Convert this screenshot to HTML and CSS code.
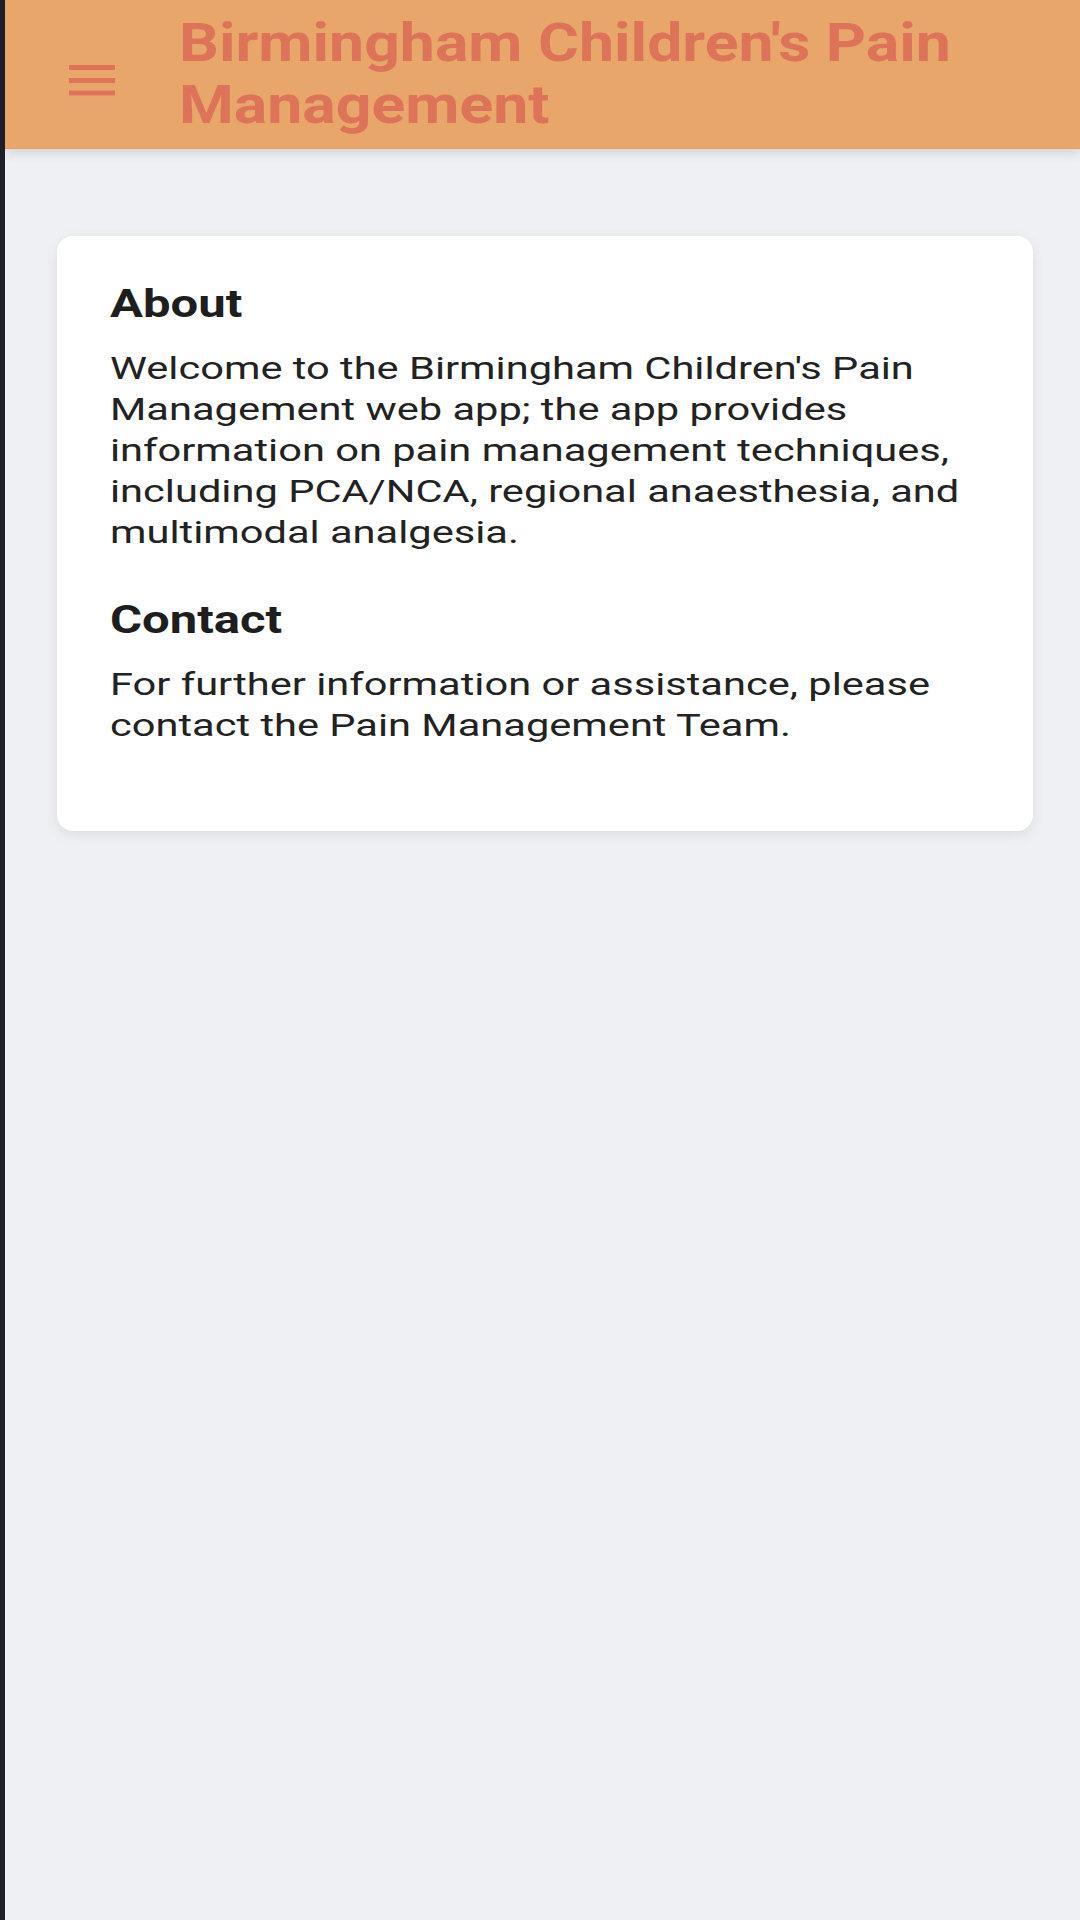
FILE: index.html
```html
<!DOCTYPE html>
<html lang="en">
<head>
<meta charset="utf-8">
<title>Birmingham Children's Pain Management</title>
<link rel="stylesheet" href="styles.css">
</head>
<body>
<div class="frame">
  <header class="topbar">
    <button class="menu" aria-label="Menu">
      <svg width="46" height="31" viewBox="0 0 46 31"><rect x="0" y="0" width="46" height="5" fill="#dd7459"/><rect x="0" y="13" width="46" height="5" fill="#dd7459"/><rect x="0" y="25.5" width="46" height="5" fill="#dd7459"/></svg>
    </button>
    <h1 class="title">Birmingham Children's Pain Management</h1>
  </header>
  <main class="content">
    <section class="card">
      <h2 class="card-heading">About</h2>
      <p class="card-text">Welcome to the Birmingham Children's Pain Management web app; the app provides information on pain management techniques, including PCA/NCA, regional anaesthesia, and multimodal analgesia.</p>
      <h2 class="card-heading contact">Contact</h2>
      <p class="card-text">For further information or assistance, please contact the Pain Management Team.</p>
    </section>
  </main>
</div>
</body>
</html>
```
FILE: styles.css
```css
html, body {
  margin: 0;
  padding: 0;
}
body {
  background: #1f2029;
  font-family: Roboto, "Liberation Sans", sans-serif;
  overflow: hidden;
}
.frame {
  margin-left: 5px;
  min-height: 1920px;
  background: #eff0f4;
}
.topbar {
  height: 149px;
  box-sizing: border-box;
  background: #e8a66b;
  border-bottom: 1px solid #eb9d62;
  display: flex;
  align-items: center;
  box-shadow: 0 4px 10px rgba(0,0,0,0.12);
  position: relative;
}
.menu {
  background: none;
  border: 0;
  padding: 0;
  margin: 12px 0 0 64px;
  width: 46px;
  height: 31px;
  display: flex;
  flex: none;
}
.title {
  margin: 0 0 0 64px;
  width: 740px;
  font-size: 53px;
  line-height: 62px;
  font-weight: 700;
  color: #dd7459;
  transform: scaleX(1.18);
  transform-origin: left center;
}
.content {
  padding: 87px 47px 0 52px;
}
.card {
  background: #fff;
  border-radius: 16px;
  box-shadow: 0 4px 14px rgba(0,0,0,0.08);
  padding: 46px 52px 85px 53px;
}
.card-heading {
  margin: 0;
  width: calc(100% / 1.29);
  font-size: 38px;
  line-height: 44px;
  font-weight: 700;
  color: #1e1e1e;
  transform: scaleX(1.29);
  transform-origin: left center;
}
.card-heading.contact {
  margin-top: 45px;
}
.card-text {
  margin: 22px 0 0;
  width: calc(100% / 1.3);
  font-size: 32px;
  line-height: 41px;
  color: #222;
  transform: scaleX(1.3);
  transform-origin: left top;
}
```
